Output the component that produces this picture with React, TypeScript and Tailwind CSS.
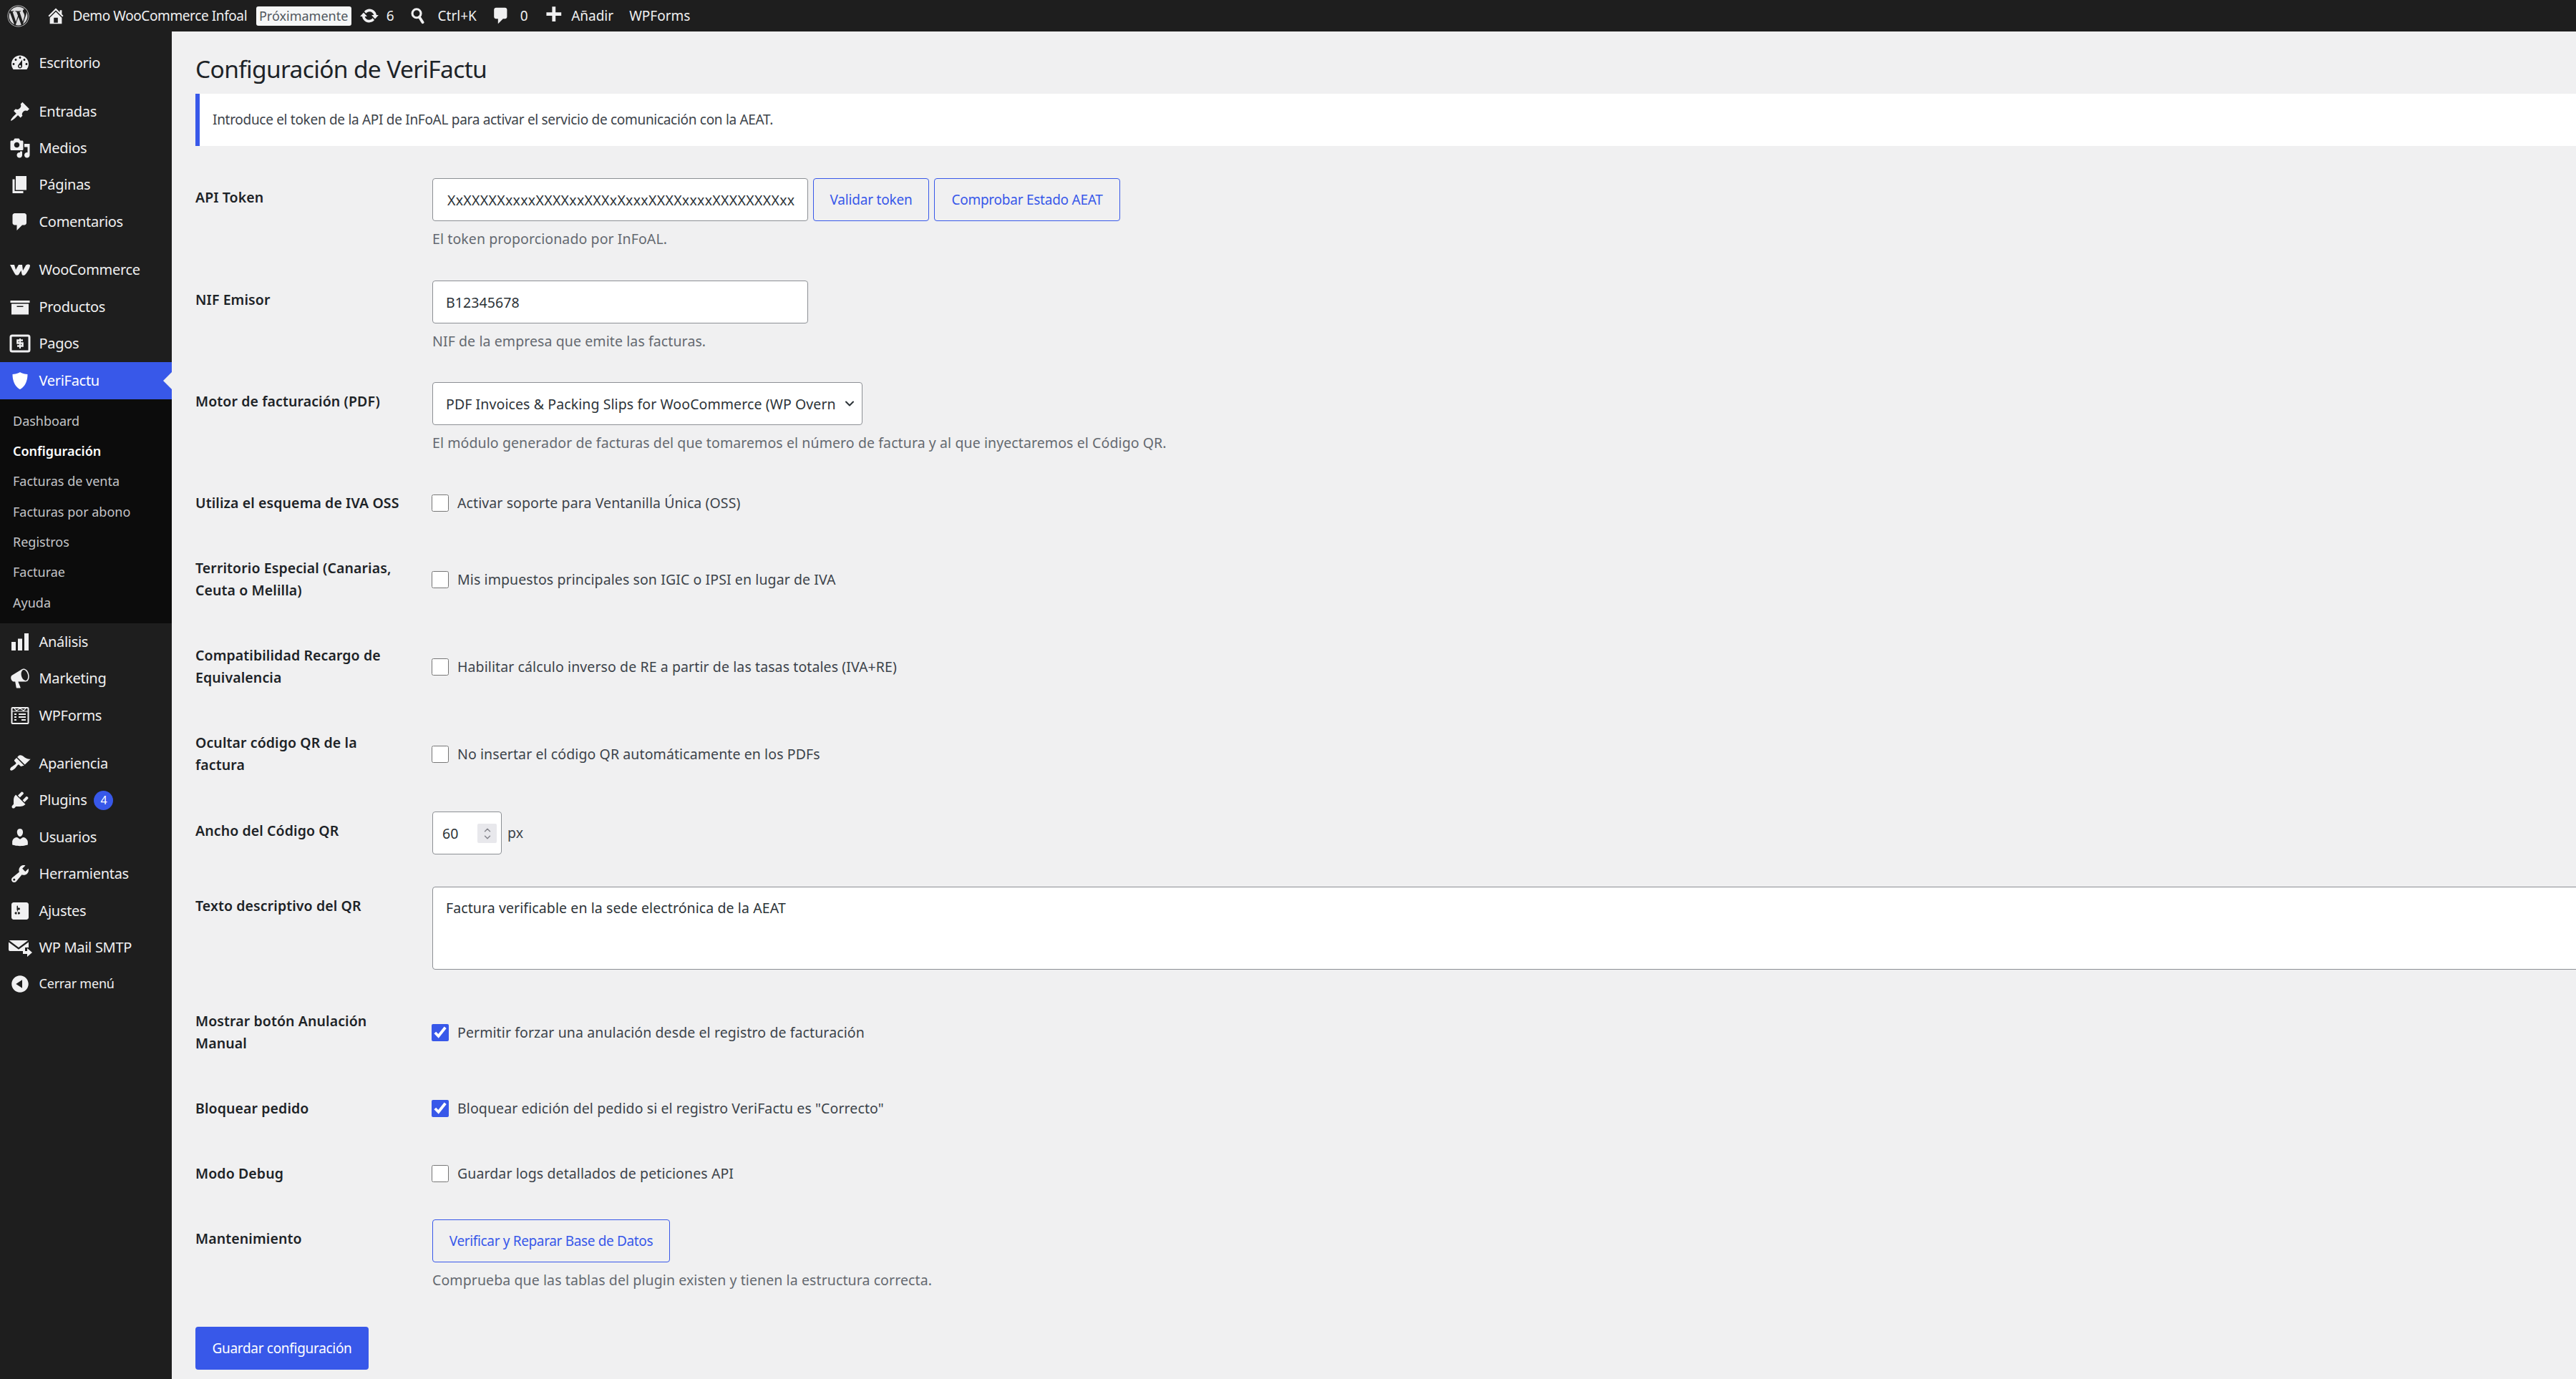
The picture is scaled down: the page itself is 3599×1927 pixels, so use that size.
import React from "react";
import { FaWordpress } from "react-icons/fa";
import { ChevronDown, ChevronUp } from "lucide-react";

const FONT = "font-['Noto_Sans','Open_Sans',sans-serif]";

function Dash({ d, className = "", size = 30 }: { d: string; className?: string; size?: number }) {
  return (
    <svg viewBox="0 0 20 20" width={size} height={size} fill="currentColor" className={"shrink-0 " + className}>
      <path d={d} />
    </svg>
  );
}

const P = {
  home: "M16 8.5l1.53 1.53-1.06 1.06L10 4.62l-6.47 6.47-1.06-1.06L10 2.5l4 4v-2h2v4zm-6-2.46l6 5.99V18H4v-5.97zM12 17v-5H8v5h4z",
  update:
    "M10.2 3.28c3.53 0 6.43 2.61 6.92 6h2.08l-3.5 4-3.5-4h2.32c-.45-1.97-2.21-3.45-4.32-3.45-1.45 0-2.73.71-3.54 1.78L4.95 5.66C6.23 4.2 8.11 3.28 10.2 3.28zm-.4 13.44c-3.52 0-6.43-2.61-6.92-6H.8l3.5-4c1.17 1.33 2.33 2.67 3.5 4H5.48c.45 1.97 2.21 3.45 4.32 3.45 1.45 0 2.73-.71 3.54-1.78l1.71 1.95c-1.28 1.46-3.15 2.38-5.25 2.38z",
  comment: "M5 2h9c1.1 0 2 .9 2 2v7c0 1.1-.9 2-2 2h-2l-5 5v-5H5c-1.1 0-2-.9-2-2V4c0-1.1.9-2 2-2z",
  plus: "M17 7v3h-5v5H9v-5H4V7h5V2h3v5h5z",
  dashboard:
    "M3.76 16h12.48c1.1-1.37 1.76-3.11 1.76-5 0-4.42-3.58-8-8-8s-8 3.58-8 8c0 1.89.66 3.63 1.76 5zM10 4c.55 0 1 .45 1 1s-.45 1-1 1-1-.45-1-1 .45-1 1-1zM6 6c.55 0 1 .45 1 1s-.45 1-1 1-1-.45-1-1 .45-1 1-1zm8 0c.55 0 1 .45 1 1s-.45 1-1 1-1-.45-1-1 .45-1 1-1zm-5.37 5.55L12 7v6c0 1.1-.9 2-2 2s-2-.9-2-2c0-.57.24-1.08.63-1.45zM4 10c.55 0 1 .45 1 1s-.45 1-1 1-1-.45-1-1 .45-1 1-1zm12 0c.55 0 1 .45 1 1s-.45 1-1 1-1-.45-1-1 .45-1 1-1zm-5 3c0-.55-.45-1-1-1s-1 .45-1 1 .45 1 1 1 1-.45 1-1z",
  post: "M10.44 3.02l1.82-1.82 6.36 6.35-1.83 1.82c-1.05-.68-2.48-.57-3.41.36l-.75.75c-.92.93-1.04 2.35-.35 3.41l-1.83 1.82-2.41-2.41-2.8 2.79c-.42.42-3.38 2.71-3.8 2.29s1.86-3.39 2.28-3.81l2.79-2.79L4.1 9.36l1.83-1.82c1.05.69 2.48.57 3.4-.36l.75-.75c.93-.92 1.05-2.35.36-3.41z",
  media:
    "M13 11V4c0-.55-.45-1-1-1h-1.67L9 1H5L3.67 3H2c-.55 0-1 .45-1 1v7c0 .55.45 1 1 1h10c.55 0 1-.45 1-1zM7 4.5c1.38 0 2.5 1.12 2.5 2.5S8.38 9.5 7 9.5 4.5 8.38 4.5 7 5.62 4.5 7 4.5zM14 6h5v10.5c0 1.38-1.12 2.5-2.5 2.5S14 17.88 14 16.5s1.12-2.5 2.5-2.5c.17 0 .34.02.5.05V9h-3V6zm-4 8.05V13h2v3.5c0 1.38-1.12 2.5-2.5 2.5S7 17.88 7 16.5 8.12 14 9.5 14c.17 0 .34.02.5.05z",
  page: "M6 15V2h10v13H6zm-1 1h8v2H3V5h2v11z",
  archive: "M19 4v2H1V4h18zM2 7h16v10H2V7zm11 3V9H7v1h6z",
  shield: "M10 2s3 2 7 2c0 11-7 14-7 14S3 15 3 4c4 0 7-2 7-2z",
  chart: "M18 18V2h-4v16h4zm-6 0V7H8v11h4zm-6 0v-8H2v8h4z",
  megaphone:
    "M18.15 5.94c.46 1.62.38 3.22-.02 4.48-.42 1.28-1.26 2.18-2.3 2.48-.16.06-.26.06-.4.06-.06.02-.12.02-.18.02-.06.02-.14.02-.22.02h-6.8l2.22 5.5c.02.14-.06.26-.14.34-.08.1-.24.16-.34.16H6.95c-.1 0-.26-.06-.34-.16-.08-.08-.16-.2-.14-.34l-1-5.5H4.25l-.02-.02c-.5.06-1.08-.18-1.54-.62s-.88-1.08-1.06-1.88c-.24-.8-.2-1.56-.02-2.2.18-.62.58-1.08 1.06-1.3l.02-.02 9-5.4c.1-.06.18-.1.24-.16.06-.04.14-.08.24-.12.16-.08.28-.12.5-.18 1.04-.3 2.24.1 3.22.98s1.84 2.24 2.26 3.86zm-2.58 5.98h-.02c.4-.1.74-.34 1.04-.7.58-.7.86-1.76.86-3.04-.02-.64-.1-1.3-.28-1.98-.34-1.36-1.02-2.5-1.78-3.24s-1.68-1.1-2.46-.88c-.38.1-.7.34-.98.7-.6.7-.88 1.76-.88 3.04 0 .64.1 1.3.26 1.98.36 1.36 1.04 2.5 1.8 3.24.78.74 1.62 1.1 2.44.88z",
  appearance:
    "M14.48 11.06L7.41 3.99l1.5-1.5c.5-.56 2.3-.47 3.51.32 1.21.8 1.43 1.28 2.91 2.1 1.18.64 2.45 1.26 4.45.85zm-.71.71L6.7 4.7 4.93 6.47c-.39.39-.39 1.02 0 1.41l1.06 1.06c.39.39.39 1.03 0 1.42-.6.6-1.43 1.11-2.21 1.69-.35.26-.7.53-1.01.84C1.43 13.23.18 15.32 1.06 16.21c.89.88 2.97-.37 4.3-1.71.3-.31.58-.66.84-1.01.58-.78 1.09-1.61 1.69-2.21.39-.39 1.02-.39 1.41 0l1.06 1.06c.39.39 1.02.39 1.41 0z",
  plugins:
    "M13.11 4.36L9.87 7.6 8 5.73l3.24-3.24c.35-.34 1.05-.2 1.56.32.52.51.66 1.21.31 1.55zm-8 1.77l.91-1.12 9.01 9.01-1.19.84c-.71.71-2.63 1.16-3.82 1.16H6.14L4.9 17.26c-.59.59-1.54.59-2.12 0-.59-.58-.59-1.53 0-2.12l1.24-1.24v-3.88c0-1.13.4-3.19 1.09-3.89zm7.26 3.97l3.24-3.24c.34-.35 1.04-.21 1.55.31.52.51.66 1.21.31 1.55l-3.24 3.25z",
  users:
    "M10 9.25c-2.27 0-2.73-3.44-2.73-3.44C7 4.02 7.82 2 9.97 2c2.16 0 2.98 2.02 2.71 3.81 0 0-.41 3.44-2.68 3.44zm0 2.57L12.72 10c2.39 0 4.52 2.33 4.52 4.53v2.49s-3.65 1.13-7.24 1.13c-3.65 0-7.24-1.13-7.24-1.13v-2.49c0-2.25 1.94-4.48 4.47-4.48z",
  tools:
    "M16.68 9.77c-1.34 1.34-3.3 1.67-4.95.99l-5.41 6.52c-.99.99-2.59.99-3.58 0s-.99-2.59 0-3.57l6.52-5.42c-.68-1.65-.35-3.61.99-4.95 1.28-1.28 3.12-1.62 4.72-1.06l-2.89 2.89 2.82 2.82 2.86-2.87c.53 1.58.18 3.39-1.08 4.65zM3.81 16.21c.4.39 1.04.39 1.43 0 .4-.4.4-1.04 0-1.43-.39-.4-1.03-.4-1.43 0-.39.39-.39 1.03 0 1.43z",
  settings:
    "M18 16V4c0-1.1-.9-2-2-2H4c-1.1 0-2 .9-2 2v12c0 1.1.9 2 2 2h12c1.1 0 2-.9 2-2zM8 11h1c.55 0 1 .45 1 1s-.45 1-1 1H8v1.5c0 .28-.22.5-.5.5s-.5-.22-.5-.5V13H6c-.55 0-1-.45-1-1s.45-1 1-1h1V5.5c0-.28.22-.5.5-.5s.5.22.5.5V7h1c.55 0 1 .45 1 1s-.45 1-1 1h-1v5.5c0 .28-.22.5-.5.5s-.5-.22-.5-.5V9z",
  collapse: "M10 2.16c4.33 0 7.84 3.51 7.84 7.84s-3.51 7.84-7.84 7.84S2.16 14.33 2.16 10 5.71 2.16 10 2.16zm2 11.72V6.12L6.18 9.97z",
};

function SearchIcon() {
  return (
    <svg viewBox="0 0 20 20" width={26} height={26} fill="none" stroke="currentColor" className="shrink-0">
      <circle cx="8.5" cy="7.5" r="4.6" strokeWidth="2.4" />
      <path d="M11.5 11.5l3.6 5.6" strokeWidth="3" strokeLinecap="round" />
    </svg>
  );
}

function Woo() {
  return (
    <svg viewBox="0 0 30 16" width={30} height={16} fill="currentColor" className="shrink-0">
      <path d="M1 1h6l2 7 4-7h5l1 8 4-7c1-2 6-2 6 0 0 3-4 10-7 13-2 1.500-4 1-4.500-1l-1-5-3 5c-1 2-4.500 2-5.500 0C6 11 3 5 1 1z" />
    </svg>
  );
}

function Pagos() {
  return (
    <svg viewBox="0 0 30 30" width={30} height={30} className="shrink-0">
      <rect x="2" y="4" width="26" height="22" rx="2" fill="none" stroke="currentColor" strokeWidth="3" />
      <path d="M19 10.500h-7.500v4h7v4H11" fill="none" stroke="currentColor" strokeWidth="2.600" />
      <path d="M15 8v14" stroke="currentColor" strokeWidth="2" />
    </svg>
  );
}

function WPFormsIcon() {
  return (
    <svg viewBox="0 0 30 30" width={30} height={30} fill="none" stroke="currentColor" className="shrink-0">
      <rect x="3.500" y="4" width="23" height="22" rx="1" strokeWidth="2" />
      <path d="M4 9h22M7 5l3 3 5-3 5 3 3-3" strokeWidth="1.200" />
      <path d="M7 13h3M7 17h3M7 21h3M13 13h10M13 17h10M17 21h6" strokeWidth="2" />
    </svg>
  );
}

function MailIcon() {
  return (
    <svg viewBox="0 0 34 30" width={34} height={30} fill="currentColor" className="shrink-0">
      <path d="M3 5h24c.4 0 .7.1 1 .3L15 15 2 5.300C2.300 5.100 2.600 5 3 5z" />
      <path d="M1 7.500l14 10.300L29 7.500V15h-5v5H3a2 2 0 0 1-2-2V7.500z" />
      <path d="M21 20h6v-4l7 6-7 6v-4h-6z" />
    </svg>
  );
}

type Item = { label: string; icon: React.ReactNode; badge?: string };

const d = (n: keyof typeof P) => <Dash d={P[n]} />;

const group1: Item[] = [{ label: "Escritorio", icon: d("dashboard") }];
const group2: Item[] = [
  { label: "Entradas", icon: d("post") },
  { label: "Medios", icon: d("media") },
  { label: "Páginas", icon: d("page") },
  { label: "Comentarios", icon: d("comment") },
];
const group3: Item[] = [
  { label: "WooCommerce", icon: <Woo /> },
  { label: "Productos", icon: d("archive") },
  { label: "Pagos", icon: <Pagos /> },
];
const group4: Item[] = [
  { label: "Análisis", icon: d("chart") },
  { label: "Marketing", icon: d("megaphone") },
  { label: "WPForms", icon: <WPFormsIcon /> },
];
const group5: Item[] = [
  { label: "Apariencia", icon: d("appearance") },
  { label: "Plugins", icon: d("plugins"), badge: "4" },
  { label: "Usuarios", icon: d("users") },
  { label: "Herramientas", icon: d("tools") },
  { label: "Ajustes", icon: d("settings") },
  { label: "WP Mail SMTP", icon: <MailIcon /> },
];

function MenuItem({ item }: { item: Item }) {
  return (
    <div className="flex h-[51.400px] items-center text-[20px] text-[#f0f0f1] tracking-[-0.3px]">
      <div className="flex w-[54.500px] shrink-0 justify-center pl-[1px] text-[#f0f0f1]">{item.icon}</div>
      <span>{item.label}</span>
      {item.badge && (
        <span className="ml-[10px] flex h-[27px] w-[27px] items-center justify-center rounded-full bg-[#3858e9] text-[16px] text-white">
          {item.badge}
        </span>
      )}
    </div>
  );
}

const subItems = ["Dashboard", "Configuración", "Facturas de venta", "Facturas por abono", "Registros", "Facturae", "Ayuda"];

function Sidebar() {
  return (
    <aside className="w-[240px] shrink-0 self-stretch bg-[#1e1e1e] pt-[18.500px]">
      {group1.map((i) => <MenuItem key={i.label} item={i} />)}
      <div className="h-[16px]" />
      {group2.map((i) => <MenuItem key={i.label} item={i} />)}
      <div className="h-[16px]" />
      {group3.map((i) => <MenuItem key={i.label} item={i} />)}
      <div className="relative flex h-[52px] items-center bg-[#3858e9] text-[20px] text-white tracking-[-0.3px]">
        <div className="flex w-[54.500px] shrink-0 justify-center pl-[1px]"><Dash d={P.shield} /></div>
        <span>VeriFactu</span>
        <span className="absolute right-0 top-[14px] h-0 w-0 border-y-[12px] border-r-[12px] border-y-transparent border-r-[#f0f0f1]" />
      </div>
      <div className="bg-[#0c0c0c] pb-[8px] pt-[9.500px]">
        {subItems.map((s) => (
          <div
            key={s}
            className={
              "flex h-[42.300px] items-center pl-[18px] text-[18px] " +
              (s === "Configuración" ? "font-semibold text-white" : "text-[#c3c4c7]")
            }
          >
            {s}
          </div>
        ))}
      </div>
      {group4.map((i) => <MenuItem key={i.label} item={i} />)}
      <div className="h-[16px]" />
      {group5.map((i) => <MenuItem key={i.label} item={i} />)}
      <div className="flex h-[50px] items-center text-[18px] text-[#f0f0f1] tracking-[-0.2px]">
        <div className="flex w-[54.500px] shrink-0 justify-center pl-[1px]"><Dash d={P.collapse} /></div>
        <span>Cerrar menú</span>
      </div>
    </aside>
  );
}

function AdminBar() {
  return (
    <header className="flex h-[44px] shrink-0 items-center whitespace-nowrap bg-[#1e1e1e] text-[19px] text-[#f0f0f1]">
      <FaWordpress className="ml-[10px] shrink-0 text-[#dcdcde]" size={31} />
      <Dash d={P.home} size={28} className="ml-[22.500px]" />
      <span className="ml-[10px] tracking-[-0.4px]">Demo WooCommerce Infoal</span>
      <span className="ml-[12.500px] flex h-[27px] w-[133px] items-center justify-center rounded-[3px] bg-[#f6f7f7] text-[18px] text-[#50575e]">Próximamente</span>
      <Dash d={P.update} size={28} className="ml-[11px]" />
      <span className="ml-[10px]">6</span>
      <span className="ml-[20px] flex"><SearchIcon /></span>
      <span className="ml-[15px]">Ctrl+K</span>
      <Dash d={P.comment} size={28} className="ml-[20px]" />
      <span className="ml-[13px]">0</span>
      <Dash d={P.plus} size={32} className="ml-[19px]" />
      <span className="ml-[9.500px]">Añadir</span>
      <span className="ml-[22px]">WPForms</span>
    </header>
  );
}

const inputBase = "border border-[#8c8f94] bg-white rounded-[4px] text-[#2c3338] text-[19.500px] tracking-[0.1px] outline-none";
const secondaryBtn =
  "flex h-[60px] items-center justify-center rounded-[4px] border border-[#3858e9] pt-[1px] text-[19px] text-[#3858e9]";
const desc = "text-[19.500px] text-[#646970] tracking-[0.1px] leading-[30px]";

function Row({ label, h, children, center }: { label: string; h: string; children: React.ReactNode; center?: boolean }) {
  return (
    <div className={"flex " + h}>
      <div className="w-[331px] shrink-0 pr-[41px] pt-[33px] text-[19.500px] font-semibold leading-[31px] tracking-[0.1px] text-[#1d2327]">
        {label}
      </div>
      <div className={center ? "-ml-[1px] flex items-center pt-[8px]" : "min-w-0 flex-1 pt-[22.500px]"}>{children}</div>
    </div>
  );
}

function Check({ label, checked }: { label: string; checked?: boolean }) {
  return (
    <label className="flex items-center gap-[12px] text-[19.500px] tracking-[0.1px] text-[#3c434a]">
      <input type="checkbox" defaultChecked={checked} className="m-0 h-[24px] w-[24px] accent-[#3858e9]" />
      {label}
    </label>
  );
}

function Form() {
  return (
    <div>
      <Row label="API Token" h="h-[143px]">
        <div className="flex gap-[7px]">
          <input
            readOnly
            value="XxXXXXXxxxxXXXXxxXXXxXxxxXXXXxxxxXXXXXXXXxx"
            className={inputBase + " h-[60px] w-[525px] pl-[20px] pr-[12px] tracking-[0.3px]"}
          />
          <button className={secondaryBtn + " w-[162px] tracking-[-0.2px]"}>Validar token</button>
          <button className={secondaryBtn + " w-[260px] tracking-[-0.25px]"}>Comprobar Estado AEAT</button>
        </div>
        <p className={desc + " mt-[10px]"}>El token proporcionado por InFoAL.</p>
      </Row>
      <Row label="NIF Emisor" h="h-[142px]">
        <input readOnly value="B12345678" className={inputBase + " h-[60px] w-[525px] px-[18px]"} />
        <p className={desc + " mt-[10px]"}>NIF de la empresa que emite las facturas.</p>
      </Row>
      <Row label="Motor de facturación (PDF)" h="h-[142px]">
        <div className="relative h-[60px] w-[601px]">
          <select className={inputBase + " h-[60px] w-full appearance-none pl-[18px] pr-[36px] pt-[2px]"}>
            <option>PDF Invoices &amp; Packing Slips for WooCommerce (WP Overnight)</option>
          </select>
          <ChevronDown className="absolute right-[8px] top-[20px] text-[#2c3338]" size={20} strokeWidth={2.5} />
        </div>
        <p className={desc + " mt-[10px]"}>El módulo generador de facturas del que tomaremos el número de factura y al que inyectaremos el Código QR.</p>
      </Row>
      <Row label="Utiliza el esquema de IVA OSS" h="h-[91px]" center>
        <Check label="Activar soporte para Ventanilla Única (OSS)" />
      </Row>
      <Row label="Territorio Especial (Canarias, Ceuta o Melilla)" h="h-[122px]" center>
        <Check label="Mis impuestos principales son IGIC o IPSI en lugar de IVA" />
      </Row>
      <Row label="Compatibilidad Recargo de Equivalencia" h="h-[122px]" center>
        <Check label="Habilitar cálculo inverso de RE a partir de las tasas totales (IVA+RE)" />
      </Row>
      <Row label="Ocultar código QR de la factura" h="h-[123px]" center>
        <Check label="No insertar el código QR automáticamente en los PDFs" />
      </Row>
      <Row label="Ancho del Código QR" h="h-[105px]">
        <div className="flex items-center gap-[8px]">
          <div className="relative h-[60px] w-[97px]">
            <input readOnly value="60" className={inputBase + " h-[60px] w-full pl-[13px]"} />
            <div className="absolute right-[7px] top-[17px] flex h-[27px] w-[27px] flex-col items-center justify-center rounded-[2px] bg-[#e8e8ec] text-[#85858c]">
              <ChevronUp size={14} strokeWidth={2.5} className="-mb-[2px]" />
              <ChevronDown size={14} strokeWidth={2.5} className="-mt-[2px]" />
            </div>
          </div>
          <span className="text-[19.500px] tracking-[0.1px] text-[#3c434a]">px</span>
        </div>
      </Row>
      <Row label="Texto descriptivo del QR" h="h-[161px]">
        <textarea
          readOnly
          value="Factura verificable en la sede electrónica de la AEAT"
          className={inputBase + " block h-[116px] w-[3100px] resize-none px-[18px] py-[14px] leading-[30px]"}
        />
      </Row>
      <Row label="Mostrar botón Anulación Manual" h="h-[122px]" center>
        <Check label="Permitir forzar una anulación desde el registro de facturación" checked />
      </Row>
      <Row label="Bloquear pedido" h="h-[91px]" center>
        <Check label={'Bloquear edición del pedido si el registro VeriFactu es "Correcto"'} checked />
      </Row>
      <Row label="Modo Debug" h="h-[91px]" center>
        <Check label="Guardar logs detallados de peticiones API" />
      </Row>
      <Row label="Mantenimiento" h="h-[172.500px]">
        <button className={secondaryBtn + " w-[332px] tracking-[-0.35px]"}>Verificar y Reparar Base de Datos</button>
        <p className={desc + " mt-[10px]"}>Comprueba que las tablas del plugin existen y tienen la estructura correcta.</p>
      </Row>
      <button className="flex h-[60px] w-[242px] items-center justify-center rounded-[4px] bg-[#3858e9] text-[19px] tracking-[-0.3px] text-white">
        Guardar configuración
      </button>
    </div>
  );
}

export default function App() {
  return (
    <div className={"flex h-[1927px] w-[3599px] flex-col overflow-hidden bg-[#f0f0f1] " + FONT}>
      <AdminBar />
      <div className="flex min-h-0 flex-1">
        <Sidebar />
        <main className="min-w-0 flex-1 overflow-hidden pl-[33px] pt-[31.500px]">
          <h1 className="text-[33.500px] leading-[40px] tracking-[-0.65px] text-[#1d2327]">Configuración de VeriFactu</h1>
          <div className="mt-[15.500px] flex h-[73px] items-center border-l-[6px] border-[#3858e9] bg-white pl-[18px] text-[19px] tracking-[-0.3px] text-[#3c434a]">
            Introduce el token de la API de InFoAL para activar el servicio de comunicación con la AEAT.
          </div>
          <div className="mt-[22.500px]">
            <Form />
          </div>
        </main>
      </div>
    </div>
  );
}
